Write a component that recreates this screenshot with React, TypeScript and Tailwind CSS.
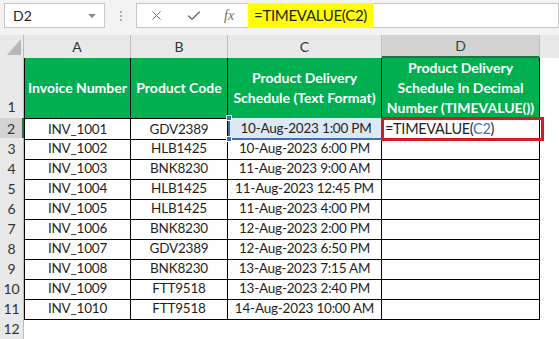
import { X, Check } from 'lucide-react';

const rows = [
  ['INV_1001', 'GDV2389', '10-Aug-2023 1:00 PM'],
  ['INV_1002', 'HLB1425', '10-Aug-2023 6:00 PM'],
  ['INV_1003', 'BNK8230', '11-Aug-2023 9:00 AM'],
  ['INV_1004', 'HLB1425', '11-Aug-2023 12:45 PM'],
  ['INV_1005', 'HLB1425', '11-Aug-2023 4:00 PM'],
  ['INV_1006', 'BNK8230', '12-Aug-2023 2:00 PM'],
  ['INV_1007', 'GDV2389', '12-Aug-2023 6:50 PM'],
  ['INV_1008', 'BNK8230', '13-Aug-2023 7:15 AM'],
  ['INV_1009', 'FTT9518', '13-Aug-2023 2:40 PM'],
  ['INV_1010', 'FTT9518', '14-Aug-2023 10:00 AM'],
];

const cols = 'grid grid-cols-[24px_107px_97px_154px_158px_1fr]';

export default function App() {
  return (
    <div className="w-[559px] h-[339px] overflow-hidden bg-white text-[14px] text-[#1f1f1f] font-['Lato','Liberation_Sans',sans-serif]">
      {/* Formula bar */}
      <div className="h-[35px] bg-[#f3f3f3] flex items-start pt-[3px] pl-1">
        <div className="w-[101px] h-[25px] bg-white border border-[#c6c6c6] flex items-center justify-between pl-2 pr-2">
          <span>D2</span>
          <span className="w-0 h-0 border-l-[4px] border-r-[4px] border-t-[4px] border-l-transparent border-r-transparent border-t-[#8a8a8a]" />
        </div>
        <div className="w-[31px] h-[25px] flex flex-col items-center justify-center gap-[2px]">
          <span className="w-[2px] h-[2px] bg-[#b0b0b0]" />
          <span className="w-[2px] h-[2px] bg-[#b0b0b0]" />
          <span className="w-[2px] h-[2px] bg-[#b0b0b0]" />
        </div>
        <div className="flex-1 h-[25px] bg-white border border-[#c6c6c6] flex items-center">
          <div className="w-[111px] flex items-center pl-3 gap-[22px] text-[#6e6e6e]">
            <X size={15} strokeWidth={1.6} />
            <Check size={16} strokeWidth={2.2} />
            <span className="italic text-[14px] font-['Liberation_Serif',serif]">fx</span>
          </div>
          <div className="h-[25px] bg-[#ffff00] flex items-center px-1.5 text-[15px] tracking-[-0.3px]">=TIMEVALUE(C2)</div>
        </div>
      </div>

      {/* Column headers */}
      <div className={`${cols} h-[23px] bg-[#e9e9e9] text-[#333]`}>
        <div className="relative border-r border-[#bdbdbd]">
          <div className="absolute right-[2px] bottom-[3px] w-0 h-0 border-l-[14px] border-l-transparent border-b-[16px] border-b-[#b8b8b8]" />
        </div>
        <div className="flex items-center justify-center border-r border-[#bdbdbd]">A</div>
        <div className="flex items-center justify-center border-r border-[#bdbdbd]">B</div>
        <div className="flex items-center justify-center border-r border-[#bdbdbd]">C</div>
        <div className="flex items-center justify-center bg-[#d3d3d3] border-r border-[#bdbdbd] border-b-2 border-b-[#217346] text-[#1f4e2c]">D</div>
        <div />
      </div>

      {/* Header row */}
      <div className={`${cols} h-[60px]`}>
        <div className="bg-[#e9e9e9] border-r border-b border-[#bdbdbd] flex items-end justify-center pb-[1px] text-[#333]">1</div>
        <div className="bg-[#00b050] text-white font-bold border-r border-b border-black border-l border-l-black flex items-center justify-center leading-5">Invoice Number</div>
        <div className="bg-[#00b050] text-white font-bold border-r border-b border-black flex items-center justify-center leading-5">Product Code</div>
        <div className="bg-[#00b050] text-white font-bold border-r border-b border-black flex items-center justify-center text-center leading-5">
          Product Delivery<br />Schedule (Text Format)
        </div>
        <div className="bg-[#00b050] text-white font-bold border-r border-b border-black flex items-center justify-center text-center leading-5">
          Product Delivery<br />Schedule In Decimal<br />Number (TIMEVALUE())
        </div>
        <div />
      </div>

      {/* Data rows */}
      {rows.map((r, i) => (
        <div key={i} className={`${cols} h-[20px] text-[13.5px] tracking-[-0.2px]`}>
          <div
            className={`flex items-center justify-center border-r border-b border-[#bdbdbd] text-[#333] text-[14px] tracking-normal ${
              i === 0 ? 'bg-[#d3d3d3] border-r-2 border-r-[#217346]' : 'bg-[#e9e9e9]'
            }`}
          >
            {i + 2}
          </div>
          <div className="flex items-center justify-center border-r border-b border-black border-l border-l-black">{r[0]}</div>
          <div className="flex items-center justify-center border-r border-b border-black">{r[1]}</div>
          {i === 0 ? (
            <div className="relative flex items-center justify-center bg-[#dde8f5] border-b-2 border-b-[#3f6fb5] border-l-2 border-l-[#3f6fb5]">
              {r[2]}
              <span className="absolute -left-[4px] -top-[3px] w-[6px] h-[6px] bg-[#3f6fb5] border border-white" />
              <span className="absolute -left-[4px] -bottom-[4px] w-[6px] h-[6px] bg-[#3f6fb5] border border-white" />
            </div>
          ) : (
            <div className="flex items-center justify-center border-r border-b border-black">{r[2]}</div>
          )}
          {i === 0 ? (
            <div className="relative border-r border-b border-black">
              <div className="absolute -left-[1px] -top-[1px] w-[163px] h-[24px] border-[3px] border-[#d71920] flex items-center pl-[1px] z-10 text-[14.5px] tracking-[-0.3px]">
                <span>
                  =TIMEVALUE(<span className="text-[#3f6fb5]">C2</span>)
                </span>
              </div>
            </div>
          ) : (
            <div className="border-r border-b border-black" />
          )}
          <div />
        </div>
      ))}

      {/* Row 12 */}
      <div className={`${cols} h-[20px]`}>
        <div className="bg-[#e9e9e9] border-r border-b border-[#bdbdbd] flex items-center justify-center text-[#333]">12</div>
      </div>
    </div>
  );
}
